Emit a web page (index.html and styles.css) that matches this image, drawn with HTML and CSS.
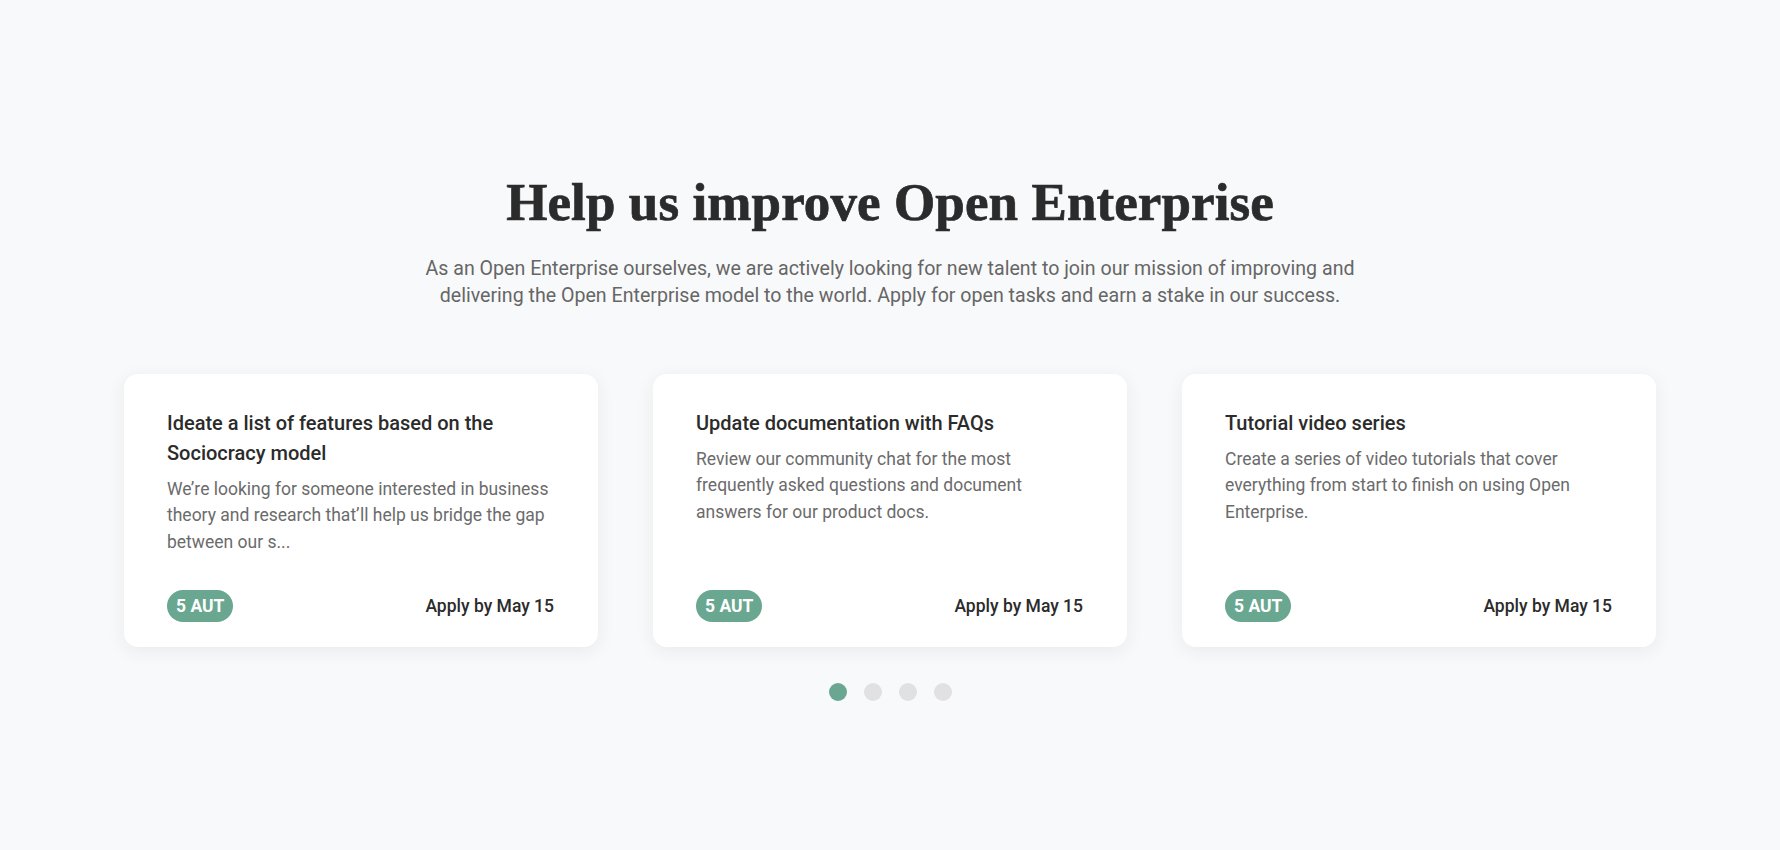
FILE: index.html
```html
<!DOCTYPE html>
<html lang="en">
<head>
<meta charset="utf-8">
<title>Help us improve Open Enterprise</title>
<link rel="stylesheet" href="styles.css">
</head>
<body>
<section class="tasks">
  <h1 class="tasks-title">Help us improve Open Enterprise</h1>
  <p class="tasks-lead">As an Open Enterprise ourselves, we are actively looking for new talent to join our mission of improving and delivering the Open Enterprise model to the world. Apply for open tasks and earn a stake in our success.</p>
  <div class="cards">
    <article class="card">
      <h2 class="card-title">Ideate a list of features based on the Sociocracy model</h2>
      <p class="card-desc">We’re looking for someone interested in business theory and research that’ll help us bridge the gap between our s...</p>
      <div class="card-foot">
        <span class="badge">5 AUT</span>
        <span class="deadline">Apply by May 15</span>
      </div>
    </article>
    <article class="card">
      <h2 class="card-title">Update documentation with FAQs</h2>
      <p class="card-desc">Review our community chat for the most frequently asked questions and document answers for our product docs.</p>
      <div class="card-foot">
        <span class="badge">5 AUT</span>
        <span class="deadline">Apply by May 15</span>
      </div>
    </article>
    <article class="card">
      <h2 class="card-title">Tutorial video series</h2>
      <p class="card-desc">Create a series of video tutorials that cover everything from start to finish on using Open Enterprise.</p>
      <div class="card-foot">
        <span class="badge">5 AUT</span>
        <span class="deadline">Apply by May 15</span>
      </div>
    </article>
  </div>
  <div class="dots">
    <span class="dot dot-active"></span>
    <span class="dot"></span>
    <span class="dot"></span>
    <span class="dot"></span>
  </div>
</section>
</body>
</html>
```

FILE: styles.css
```css
html, body {
  margin: 0;
  padding: 0;
}

body {
  background: #f8f9fa;
  font-family: Roboto, "Liberation Sans", sans-serif;
  color: #2b2b2b;
  min-height: 850px;
}

.tasks {
  padding-top: 170px;
  display: flex;
  flex-direction: column;
  align-items: center;
  text-align: center;
}

.tasks-title {
  margin: 0;
  font-family: "Liberation Serif", "DejaVu Serif", serif;
  font-weight: 700;
  font-size: 53px;
  line-height: 64px;
  color: #2b2b2b;
  letter-spacing: 0.1px;
  -webkit-text-stroke: 0.7px #2b2b2b;
}

.tasks-lead {
  margin: 21px 0 0;
  width: 960px;
  font-size: 19.6px;
  line-height: 27px;
  color: #666666;
}

.cards {
  margin-top: 65px;
  display: grid;
  grid-template-columns: repeat(3, 474px);
  column-gap: 55px;
  justify-content: center;
  text-align: left;
}

.card {
  height: 273px;
  box-sizing: border-box;
  padding: 34px 44px 25px 43px;
  background: #ffffff;
  border-radius: 14px;
  box-shadow: 0 4px 18px rgba(30, 40, 50, 0.07);
  display: flex;
  flex-direction: column;
}

.card-title {
  margin: 0;
  font-size: 20px;
  line-height: 30px;
  font-weight: 500;
  color: #2b2b2b;
}

.card-desc {
  margin: 8px -8px 0 0;
  font-size: 17.5px;
  line-height: 26.3px;
  color: #6b6b6b;
}

.card-foot {
  margin-top: auto;
  display: flex;
  justify-content: space-between;
  align-items: center;
}

.badge {
  display: inline-block;
  height: 32px;
  line-height: 32px;
  padding: 0 9px;
  border-radius: 16px;
  background: #6aa791;
  color: #ffffff;
  font-size: 17.5px;
  font-weight: 700;
}

.deadline {
  font-size: 17.5px;
  font-weight: 500;
  color: #2b2b2b;
}

.dots {
  margin-top: 36px;
  display: flex;
  gap: 17px;
  justify-content: center;
}

.dot {
  width: 18px;
  height: 18px;
  border-radius: 50%;
  background: #e1e1e3;
}

.dot-active {
  background: #6aa791;
}
```
